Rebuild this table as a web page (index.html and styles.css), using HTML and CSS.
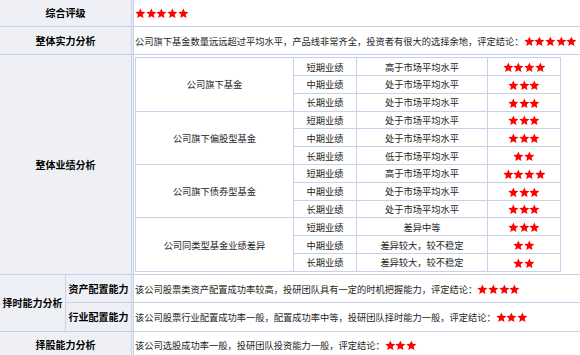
FILE: index.html
```html
<!DOCTYPE html>
<html lang="zh-CN">
<head>
<meta charset="utf-8">
<title>综合评级</title>
<link rel="stylesheet" href="styles.css">
</head>
<body>
<svg class="sprite" width="0" height="0" aria-hidden="true">
  <symbol id="star" viewBox="0 0 24 24">
    <polygon points="12,0.9 15.17,8.53 23.41,9.19 17.14,14.57 19.05,22.61 12,18.3 4.95,22.61 6.86,14.57 0.59,9.19 8.83,8.53" fill="#ff0000"/>
  </symbol>
</svg>
<table class="grid">
  <colgroup><col class="c1"><col class="c2"><col class="c3"></colgroup>
  <tr class="r1">
    <td class="label" colspan="2">综合评级</td>
    <td class="content"><span class="stars"><svg class="star"><use href="#star"/></svg><svg class="star"><use href="#star"/></svg><svg class="star"><use href="#star"/></svg><svg class="star"><use href="#star"/></svg><svg class="star"><use href="#star"/></svg></span></td>
  </tr>
  <tr class="r2">
    <td class="label" colspan="2">整体实力分析</td>
    <td class="content">公司旗下基金数量远远超过平均水平，产品线非常齐全，投资者有很大的选择余地，评定结论：<span class="stars"><svg class="star"><use href="#star"/></svg><svg class="star"><use href="#star"/></svg><svg class="star"><use href="#star"/></svg><svg class="star"><use href="#star"/></svg><svg class="star"><use href="#star"/></svg></span></td>
  </tr>
  <tr class="r3">
    <td class="label" colspan="2">整体业绩分析</td>
    <td class="content nest-cell">
      <table class="nested">
        <colgroup><col class="n1"><col class="n2"><col class="n3"><col class="n4"></colgroup>
        <tr>
          <td rowspan="3">公司旗下基金</td>
          <td>短期业绩</td><td>高于市场平均水平</td>
          <td><span class="stars"><svg class="star"><use href="#star"/></svg><svg class="star"><use href="#star"/></svg><svg class="star"><use href="#star"/></svg><svg class="star"><use href="#star"/></svg></span></td>
        </tr>
        <tr>
          <td>中期业绩</td><td>处于市场平均水平</td>
          <td><span class="stars"><svg class="star"><use href="#star"/></svg><svg class="star"><use href="#star"/></svg><svg class="star"><use href="#star"/></svg></span></td>
        </tr>
        <tr>
          <td>长期业绩</td><td>处于市场平均水平</td>
          <td><span class="stars"><svg class="star"><use href="#star"/></svg><svg class="star"><use href="#star"/></svg><svg class="star"><use href="#star"/></svg></span></td>
        </tr>
        <tr>
          <td rowspan="3">公司旗下偏股型基金</td>
          <td>短期业绩</td><td>处于市场平均水平</td>
          <td><span class="stars"><svg class="star"><use href="#star"/></svg><svg class="star"><use href="#star"/></svg><svg class="star"><use href="#star"/></svg></span></td>
        </tr>
        <tr>
          <td>中期业绩</td><td>处于市场平均水平</td>
          <td><span class="stars"><svg class="star"><use href="#star"/></svg><svg class="star"><use href="#star"/></svg><svg class="star"><use href="#star"/></svg></span></td>
        </tr>
        <tr>
          <td>长期业绩</td><td>低于市场平均水平</td>
          <td><span class="stars"><svg class="star"><use href="#star"/></svg><svg class="star"><use href="#star"/></svg></span></td>
        </tr>
        <tr>
          <td rowspan="3">公司旗下债券型基金</td>
          <td>短期业绩</td><td>高于市场平均水平</td>
          <td><span class="stars"><svg class="star"><use href="#star"/></svg><svg class="star"><use href="#star"/></svg><svg class="star"><use href="#star"/></svg><svg class="star"><use href="#star"/></svg></span></td>
        </tr>
        <tr>
          <td>中期业绩</td><td>处于市场平均水平</td>
          <td><span class="stars"><svg class="star"><use href="#star"/></svg><svg class="star"><use href="#star"/></svg><svg class="star"><use href="#star"/></svg></span></td>
        </tr>
        <tr>
          <td>长期业绩</td><td>处于市场平均水平</td>
          <td><span class="stars"><svg class="star"><use href="#star"/></svg><svg class="star"><use href="#star"/></svg><svg class="star"><use href="#star"/></svg></span></td>
        </tr>
        <tr>
          <td rowspan="3">公司同类型基金业绩差异</td>
          <td>短期业绩</td><td>差异中等</td>
          <td><span class="stars"><svg class="star"><use href="#star"/></svg><svg class="star"><use href="#star"/></svg><svg class="star"><use href="#star"/></svg></span></td>
        </tr>
        <tr>
          <td>中期业绩</td><td>差异较大，较不稳定</td>
          <td><span class="stars"><svg class="star"><use href="#star"/></svg><svg class="star"><use href="#star"/></svg></span></td>
        </tr>
        <tr>
          <td>长期业绩</td><td>差异较大，较不稳定</td>
          <td><span class="stars"><svg class="star"><use href="#star"/></svg><svg class="star"><use href="#star"/></svg></span></td>
        </tr>
      </table>
    </td>
  </tr>
  <tr class="r4a">
    <td class="label label-group" rowspan="2">择时能力分析</td>
    <td class="label">资产配置能力</td>
    <td class="content">该公司股票类资产配置成功率较高，投研团队具有一定的时机把握能力，评定结论：<span class="stars"><svg class="star"><use href="#star"/></svg><svg class="star"><use href="#star"/></svg><svg class="star"><use href="#star"/></svg><svg class="star"><use href="#star"/></svg></span></td>
  </tr>
  <tr class="r4b">
    <td class="label">行业配置能力</td>
    <td class="content">该公司股票行业配置成功率一般，配置成功率中等，投研团队择时能力一般，评定结论：<span class="stars"><svg class="star"><use href="#star"/></svg><svg class="star"><use href="#star"/></svg><svg class="star"><use href="#star"/></svg></span></td>
  </tr>
  <tr class="r5">
    <td class="label" colspan="2">择股能力分析</td>
    <td class="content">该公司选股成功率一般，投研团队投资能力一般，评定结论：<span class="stars"><svg class="star"><use href="#star"/></svg><svg class="star"><use href="#star"/></svg><svg class="star"><use href="#star"/></svg></span></td>
  </tr>
</table>
</body>
</html>
```
FILE: styles.css
```css
html, body {
  margin: 0;
  padding: 0;
  background: #ffffff;
}

body {
  font-family: "Noto Sans CJK SC", "Noto Sans", sans-serif;
  color: #1e1e1e;
  overflow: hidden;
}

.sprite {
  display: block;
  width: 0;
  height: 0;
  overflow: hidden;
}

.grid {
  width: 580px;
  table-layout: fixed;
  border-collapse: separate;
  border-spacing: 0;
  font-size: 9.25px;
  line-height: 12px;
}

.c1 { width: 66px; }
.c2 { width: 68px; }
.c3 { width: 446px; }

.grid > tbody > tr > td,
.grid > tr > td {
  padding: 0;
  border-bottom: 1px solid #c6d2ea;
  vertical-align: middle;
  white-space: nowrap;
}

.r1 { height: 27px; }
.r2 { height: 28px; }
.r3 { height: 220px; }
.r4a { height: 28px; }
.r4b { height: 29px; }
.r5 { height: 27px; }

.label {
  background: #eef0f5;
  text-align: center;
  font-weight: bold;
  font-size: 10px;
  color: #000000;
  border-right: 3px double #c6d2ea;
}

.grid .label-group {
  border-right: 1px solid #c6d2ea;
}

.content {
  background: #ffffff;
  padding-left: 1px !important;
  text-align: left;
}

.nest-cell {
  padding: 2px 0 2px 1px !important;
}

.nested {
  width: 426px;
  table-layout: fixed;
  border-collapse: collapse;
  font-size: 9.25px;
  line-height: 12px;
}

.n1 { width: 158px; }
.n2 { width: 63px; }
.n3 { width: 131px; }
.n4 { width: 73px; }

.nested tr {
  height: 17.8px;
}

.nested td {
  border: 1px solid #c6d2ea;
  padding: 0;
  text-align: center;
  vertical-align: middle;
  white-space: nowrap;
  color: #1e1e1e;
}

.stars {
  display: inline-flex;
  vertical-align: -2px;
}

.star {
  width: 10.7px;
  height: 10.7px;
  display: block;
}
```
